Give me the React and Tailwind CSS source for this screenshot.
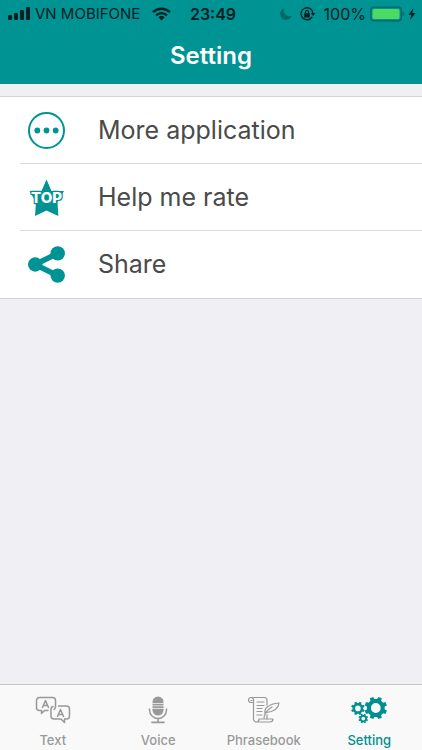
import React, { useState } from 'react';

const gearPath = (cx, cy, outer, inner, hole, teeth) => {
  const step = (Math.PI * 2) / teeth;
  const at = (r, a) => `${(cx + r * Math.cos(a)).toFixed(2)} ${(cy + r * Math.sin(a)).toFixed(2)}`;
  const points = [];
  for (let i = 0; i < teeth; i++) {
    const a = (i + 0.5) * step;
    points.push(at(inner, a - step * 0.3), at(outer, a - step * 0.21), at(outer, a + step * 0.21), at(inner, a + step * 0.3));
  }
  return `M${points.join('L')}ZM${cx - hole} ${cy}a${hole} ${hole} 0 1 0 ${hole * 2} 0a${hole} ${hole} 0 1 0 ${-hole * 2} 0Z`;
};

const SignalIcon = () => (
  <svg width="23" height="14" viewBox="0 0 23 14" fill="currentColor" aria-hidden="true">
    <rect x="0" y="8" width="4" height="5" rx="1" />
    <rect x="6" y="6" width="4" height="7" rx="1" />
    <rect x="12" y="3" width="4" height="10" rx="1" />
    <rect x="18" y="0" width="4" height="13" rx="1" />
  </svg>
);

const WifiIcon = () => (
  <svg width="19" height="14" viewBox="0 0 19 14" fill="none" stroke="currentColor" strokeWidth="2.4" aria-hidden="true">
    <path d="M1 5.2a12.2 12.2 0 0 1 17 0" />
    <path d="M4.1 8.3a7.8 7.8 0 0 1 10.8 0" />
    <path d="M9.5 13.4 6.4 10.3a4.5 4.5 0 0 1 6.2 0Z" fill="currentColor" stroke="none" />
  </svg>
);

const MoonIcon = () => (
  <svg width="12" height="12" viewBox="0 0 12 12" fill="#00696a" aria-hidden="true">
    <path d="M4.2.3A5.9 5.9 0 1 0 11.7 7.6 5.6 5.6 0 0 1 4.2.3Z" />
  </svg>
);

const LockIcon = () => (
  <svg width="16" height="14" viewBox="0 0 16 14" fill="none" stroke="currentColor" aria-hidden="true">
    <path d="M12.2 9.8A6 6 0 1 1 13 6.2" strokeWidth="1.3" />
    <path d="M10.7 6h4.8L13.1 9Z" fill="currentColor" stroke="none" />
    <rect x="4.2" y="6.2" width="5.6" height="4.2" rx=".5" fill="currentColor" stroke="none" />
    <path d="M5.4 6.5V5.2a1.6 1.6 0 0 1 3.2 0v1.3" strokeWidth="1.1" />
  </svg>
);

const BatteryIcon = () => (
  <svg width="48" height="16" viewBox="0 0 48 16" aria-hidden="true">
    <rect x=".75" y="1.25" width="30.5" height="13.5" rx="3" fill="none" stroke="#006a6c" strokeWidth="1.5" />
    <rect x="2.5" y="3" width="27" height="10" rx="1.5" fill="#4cd964" />
    <path d="M32.5 5.5c2 .8 2 4.2 0 5Z" fill="#006a6c" />
    <path d="M43.5 2 38.5 8.8h3L40 14l5.5-7h-3.2Z" fill="currentColor" />
  </svg>
);

const MoreIcon = () => (
  <svg width="38" height="38" viewBox="0 0 38 38" fill="currentColor" aria-hidden="true">
    <circle cx="18.5" cy="18.5" r="17.5" fill="none" stroke="currentColor" strokeWidth="2" />
    <circle cx="9.3" cy="18.5" r="2.9" />
    <circle cx="18.5" cy="18.5" r="2.9" />
    <circle cx="27.7" cy="18.5" r="2.9" />
  </svg>
);

const TopIcon = () => (
  <svg width="38" height="38" viewBox="0 0 38 38" fill="currentColor" aria-hidden="true">
    <path d="M18.5.5 23.5 12H36l-6.5 11 .8 14-11.800-5.500L7 37l1-14L1.500 12h12Z" />
    <text
      x="18.5"
      y="24"
      textAnchor="middle"
      className="font-['Inter',sans-serif] text-[15px] font-extrabold"
      stroke="#009393"
      strokeWidth="2.4"
      strokeLinejoin="round"
    >
      TOP
    </text>
    <text
      x="18.5"
      y="24"
      textAnchor="middle"
      className="font-['Inter',sans-serif] text-[15px] font-extrabold"
      fill="#fff"
    >
      TOP
    </text>
  </svg>
);

const ShareIcon = () => (
  <svg width="38" height="38" viewBox="0 0 38 38" fill="currentColor" aria-hidden="true">
    <path d="M29.5 7.5 7 18.5l22.500 11" fill="none" stroke="currentColor" strokeWidth="5.5" />
    <circle cx="7.2" cy="18.5" r="7.2" />
    <circle cx="29.7" cy="7.4" r="7.2" />
    <circle cx="29.7" cy="29.6" r="7.2" />
  </svg>
);

const TextIcon = () => (
  <svg width="36" height="28" viewBox="0 0 36 28" fill="none" stroke="currentColor" strokeWidth="1.5" strokeLinejoin="round" strokeLinecap="round" aria-hidden="true">
    <path d="M13 14.5H9.5l-3 3v-3h-2a3 3 0 0 1-3-3v-7a3 3 0 0 1 3-3h13a3 3 0 0 1 3 3V11a3 3 0 0 1-1.500 2.500" />
    <path d="M18 10.500a3 3 0 0 0-2 3V20a3 3 0 0 0 3 3h7l3.500 3.500V23h2a3 3 0 0 0 3-3v-7a3 3 0 0 0-3-3h-8" />
    <path d="M7.500 11.500l3-7 3 7M8.500 9.500h4M22.500 20.500l3-7 3 7M23.500 18.500h4" />
  </svg>
);

const VoiceIcon = () => (
  <svg width="36" height="28" viewBox="0 0 36 28" fill="none" stroke="currentColor" aria-hidden="true">
    <path d="M12.500 7V6a5.500 5.500 0 0 1 11 0v1ZM12.500 13.500h11V14a5.500 5.500 0 0 1-11 0Z" fill="currentColor" stroke="none" />
    <path d="M12.500 8.700h11M12.500 11.200h11M12.500 13.500h11" strokeWidth="1.7" />
    <path d="M9.500 12.500V14a8.500 8.500 0 0 0 17 0v-1.500M18 22.500v4" strokeWidth="1.5" />
    <path d="M12 26.400h12" strokeWidth="1.6" strokeLinecap="round" />
  </svg>
);

const PhrasebookIcon = () => (
  <svg width="36" height="28" viewBox="0 0 36 28" fill="none" stroke="currentColor" strokeWidth="1.2" strokeLinejoin="round" strokeLinecap="round" aria-hidden="true">
    <path d="M5 6.500h2.500v16a3 3 0 0 0 3 3.500H24a3 3 0 0 0 3-3H13a2.800 2.800 0 0 1-2.500 3" />
    <path d="M5 6.500A2.500 2.500 0 1 1 7.500 4v2.500M5 1.500h13.500A2.500 2.500 0 0 1 21 4v5M5 4.500h1M21 18.500V23" />
    <path d="M11 6h7M11 9.500h7M11 12.500h5M11 15.500h5M11 19h5" />
    <path d="M18 22c.5-5 3-8 8-11M19 17.500c-1-5 3-9.500 14-10.500-.5 5-4.500 8.500-12.500 9.500" />
  </svg>
);

const SettingIcon = () => (
  <svg width="36" height="28" viewBox="0 0 36 28" fill="currentColor" fillRule="evenodd" aria-hidden="true">
    <path d={gearPath(24.8, 12, 11.4, 9, 4.9, 8)} />
    <path d={gearPath(6.9, 12.4, 6.9, 5.4, 2.8, 8)} />
    <path d={gearPath(12.3, 22.6, 4.9, 3.8, 1.9, 8)} />
  </svg>
);

const rows = [
  { label: 'More application', Icon: MoreIcon },
  { label: 'Help me rate', Icon: TopIcon },
  { label: 'Share', Icon: ShareIcon },
];

const tabs = [
  { label: 'Text', Icon: TextIcon },
  { label: 'Voice', Icon: VoiceIcon },
  { label: 'Phrasebook', Icon: PhrasebookIcon },
  { label: 'Setting', Icon: SettingIcon },
];

const App = () => {
  const [activeTab, setActiveTab] = useState('Setting');

  return (
    <div className="flex min-h-screen flex-col bg-[#efeff4] font-['Inter',sans-serif]">
      <header className="bg-[#009393]">
        <div className="grid h-7 grid-cols-[1fr_auto_1fr] items-center pr-1 pl-2 text-base text-[#062023]">
          <div className="flex items-center gap-1">
            <SignalIcon />
            <span className="mr-2 whitespace-nowrap text-[15px]">VN MOBIFONE</span>
            <WifiIcon />
          </div>
          <span className="font-semibold">23:49</span>
          <div className="flex items-center justify-end gap-1">
            <MoonIcon />
            <span className="mx-1"><LockIcon /></span>
            <span>100%</span>
            <BatteryIcon />
          </div>
        </div>
        <h1 className="text-center text-2xl leading-[56px] font-semibold text-white">Setting</h1>
      </header>

      <main className="flex-1 pt-3">
        <ul className="border-y border-[#d3d2d8] bg-white">
          {rows.map(({ label, Icon }, i) => (
            <li key={label} className="pl-5">
              <button
                type="button"
                className={`flex h-[67px] w-full items-center gap-8 pt-px pl-2 text-left text-[25px] text-[#4a4a4a] ${
                  i < rows.length - 1 ? 'border-b border-[#dcdce0]' : ''
                }`}
              >
                <span className="text-[#009393]"><Icon /></span>
                {label}
              </button>
            </li>
          ))}
        </ul>
      </main>

      <nav className="grid grid-cols-4 border-t border-[#c5c5ca] bg-[#f9f9f9]">
        {tabs.map(({ label, Icon }) => (
          <button
            key={label}
            type="button"
            onClick={() => setActiveTab(label)}
            className={`flex flex-col items-center gap-2 pt-[11px] pb-0.5 text-[13px] leading-4 font-medium ${
              activeTab === label ? 'text-[#008e8e]' : 'text-[#999999]'
            }`}
          >
            <Icon />
            {label}
          </button>
        ))}
      </nav>
    </div>
  );
};

export default App;
